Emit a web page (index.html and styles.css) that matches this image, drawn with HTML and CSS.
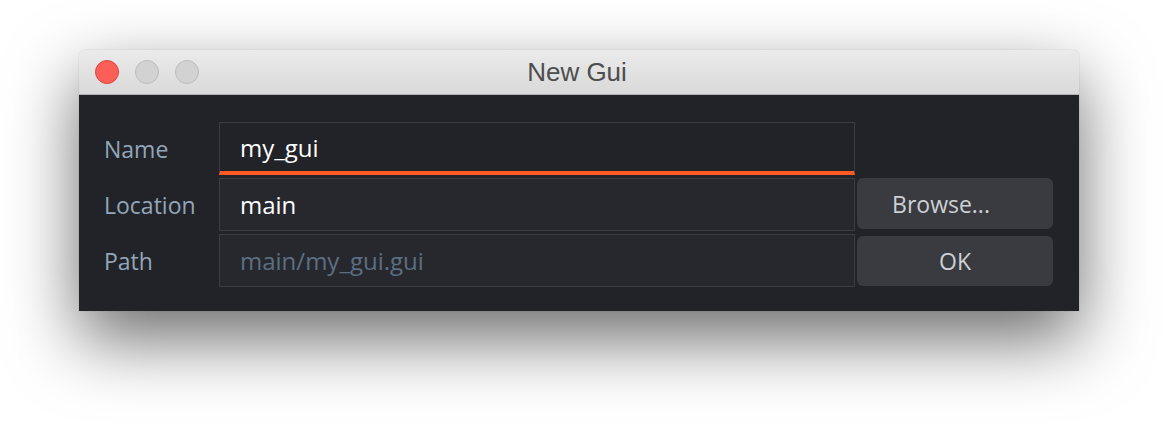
FILE: index.html
```html
<!DOCTYPE html>
<html lang="en">
<head>
<meta charset="utf-8">
<title>New Gui</title>
<link rel="stylesheet" href="styles.css">
</head>
<body>
<div class="window">
  <div class="titlebar">
    <div class="lights">
      <span class="light close"></span>
      <span class="light"></span>
      <span class="light"></span>
    </div>
    <div class="title">New Gui</div>
    <div class="spacer"></div>
  </div>
  <div class="content">
    <div class="label">Name</div>
    <div class="field active">my_gui</div>
    <div class="empty"></div>

    <div class="label">Location</div>
    <div class="field filled">main</div>
    <button class="btn browse">Browse...</button>

    <div class="label">Path</div>
    <div class="field filled muted">main/my_gui.gui</div>
    <button class="btn ok">OK</button>
  </div>
</div>
</body>
</html>
```

FILE: styles.css
```css
html, body {
  margin: 0;
  padding: 0;
  background: #ffffff;
}
body {
  padding: 50px 0 0 79px;
  height: 427px;
  box-sizing: border-box;
  overflow: hidden;
}
.window {
  width: 1000px;
  border-radius: 6px 6px 0 0;
  box-shadow: 0 28px 70px rgba(0,0,0,0.58), 0 0 1px rgba(0,0,0,0.35);
  overflow: hidden;
}
.titlebar {
  height: 44px;
  display: grid;
  grid-template-columns: 1fr auto 1fr;
  align-items: center;
  background: linear-gradient(#ebebeb, #d9d9d9);
  border-bottom: 1px solid #b4b4b4;
}
.lights {
  display: flex;
  gap: 16px;
  padding-left: 16px;
}
.light {
  width: 22px;
  height: 22px;
  border-radius: 50%;
  background: #d2d2d2;
  border: 1px solid #bcbcbc;
}
.light.close {
  background: #fc5f57;
  border-color: #e0463f;
}
.title {
  font-family: "Liberation Sans", Arial, sans-serif;
  font-size: 26px;
  color: #4d4d4d;
  padding-top: 1px;
  margin-left: -4px;
}
.content {
  background: #212328;
  display: grid;
  grid-template-columns: 113px 636px 196px;
  grid-template-rows: 53px 53px 53px;
  column-gap: 2px;
  row-gap: 3px;
  padding: 27px 26px 24px 25px;
  font-family: "Open Sans", sans-serif;
}
.label {
  display: flex;
  align-items: center;
  font-size: 23px;
  color: #93a6b9;
}
.field {
  display: flex;
  align-items: center;
  box-sizing: border-box;
  border: 1px solid #3a3d43;
  padding-left: 20px;
  font-size: 24px;
  color: #ffffff;
}
.field.active {
  background: #212328;
  border-bottom: 4px solid #fb5a22;
}
.field.filled {
  background: #27282d;
}
.field.muted {
  color: #5c6f82;
}
.btn {
  margin: 0;
  border: none;
  border-radius: 6px;
  background: #393b40;
  color: #cdd0d4;
  font-family: "Open Sans", sans-serif;
  font-size: 23px;
  height: 51px;
  align-self: center;
  padding: 0;
}
.btn.browse {
  padding-right: 28px;
  margin-top: -2px;
}
.btn.ok {
  height: 50px;
}
```
